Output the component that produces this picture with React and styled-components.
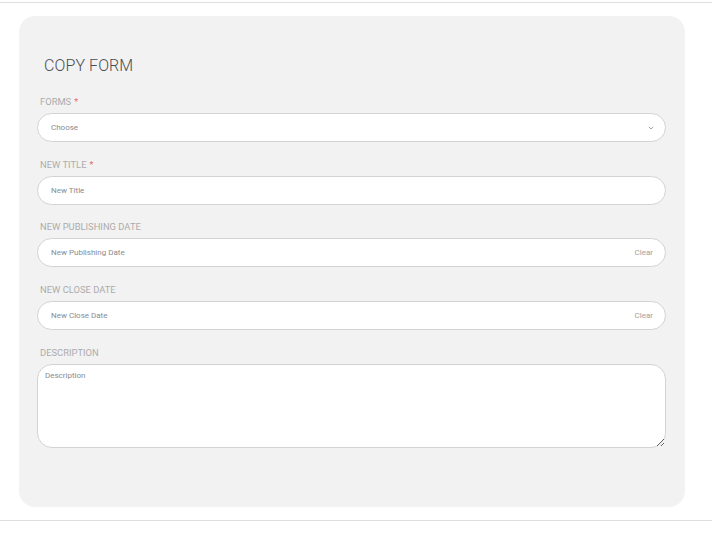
import React from "react";
import styled, { createGlobalStyle } from "styled-components";

const GlobalStyle = createGlobalStyle`
  html, body { margin: 0; padding: 0; background: #ffffff; }
  body { font-family: Roboto, "Liberation Sans", Arial, sans-serif; }
  * { box-sizing: border-box; }
`;

const Page = styled.div`
  padding-top: 2px;
`;

const Section = styled.section`
  border-top: 1px solid #dedede;
  border-bottom: 1px solid #dedede;
  padding: 13px 27px 13px 19px;
`;

const Card = styled.div`
  background: #f2f2f2;
  border-radius: 16px;
  padding: 40px 19px 59.3px 18px;
`;

const Title = styled.h2`
  margin: 0 0 22px;
  padding-left: 7px;
  font-family: Roboto, sans-serif;
  font-weight: 300;
  font-size: 16px;
  line-height: 19px;
  color: #4a4e54;
  letter-spacing: 0.1px;
`;

const Group = styled.div`
  margin-bottom: ${(p) => (p.$last ? 0 : 17.7)}px;
`;

const Label = styled.label`
  display: block;
  height: 12px;
  padding-left: 3px;
  margin: -1px 0 5px;
  font-family: Roboto, sans-serif;
  font-weight: 400;
  font-size: 9.4px;
  line-height: 12px;
  color: #acacac;
  text-transform: uppercase;
`;

const Req = styled.span`
  color: #e86a6a;
  margin-left: 3px;
  font-size: 9px;
`;

const Field = styled.div`
  display: flex;
  align-items: center;
  height: 29px;
  background: #ffffff;
  border: 1px solid #d3d3d3;
  border-radius: 15px;
  padding: 0 ${(p) => p.$pr || 13}px 0 13px;
`;

const TextInput = styled.input`
  flex: 1;
  min-width: 0;
  border: none;
  outline: none;
  background: transparent;
  padding: 0;
  font-family: Roboto, sans-serif;
  font-size: 8px;
  color: #555;
  &::placeholder { color: #878b91; }
`;

const SelectText = styled.span`
  flex: 1;
  font-family: Roboto, sans-serif;
  font-size: 8px;
  color: #878b91;
`;

const ClearButton = styled.button`
  border: none;
  background: none;
  padding: 0;
  font-family: Roboto, sans-serif;
  font-size: 8px;
  color: #a0a0a0;
  cursor: pointer;
  margin-top: -1px;
`;

const TextArea = styled.textarea`
  display: block;
  width: 100%;
  height: 84px;
  background: #ffffff;
  border: 1px solid #d3d3d3;
  border-radius: 15px;
  padding: 6px 7px;
  outline: none;
  font-family: Roboto, sans-serif;
  font-size: 8px;
  color: #555;
  &::placeholder { color: #878b91; }
`;

const Chevron = () => (
  <svg width="6" height="4" viewBox="0 0 6 4">
    <path d="M0.8 0.8 L3 3 L5.2 0.8" fill="none" stroke="#9a9a9a" strokeWidth="0.9" />
  </svg>
);

export default function App() {
  return (
    <>
      <GlobalStyle />
      <Page>
        <Section>
          <Card>
            <Title>COPY FORM</Title>
            <Group>
              <Label>Forms<Req>*</Req></Label>
              <Field $pr={11}>
                <SelectText>Choose</SelectText>
                <Chevron />
              </Field>
            </Group>
            <Group>
              <Label>New Title<Req>*</Req></Label>
              <Field>
                <TextInput placeholder="New Title" />
              </Field>
            </Group>
            <Group>
              <Label>New Publishing Date</Label>
              <Field $pr={12}>
                <TextInput placeholder="New Publishing Date" />
                <ClearButton>Clear</ClearButton>
              </Field>
            </Group>
            <Group>
              <Label>New Close Date</Label>
              <Field $pr={12}>
                <TextInput placeholder="New Close Date" />
                <ClearButton>Clear</ClearButton>
              </Field>
            </Group>
            <Group $last>
              <Label>Description</Label>
              <TextArea placeholder="Description" />
            </Group>
          </Card>
        </Section>
      </Page>
    </>
  );
}
